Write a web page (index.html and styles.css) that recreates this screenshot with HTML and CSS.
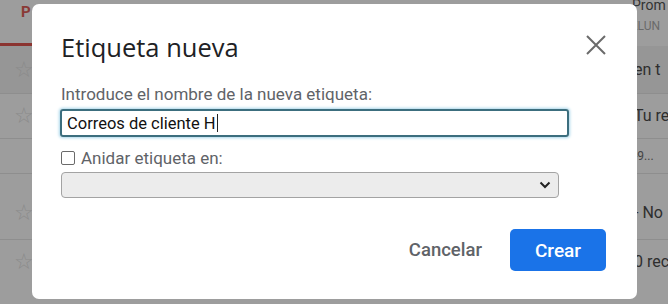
FILE: index.html
```html
<!DOCTYPE html>
<html lang="es">
<head>
<meta charset="utf-8">
<link rel="stylesheet" href="styles.css">
</head>
<body>
<div class="page">
  <div class="head">
    <span class="tab-p">P</span>
    <div class="head-right">
      <span class="from">Prom</span>
      <span class="sub">KLUN</span>
    </div>
  </div>
  <div class="tabline"></div>
  <div class="row r1"><span class="star">☆</span><span class="rtext">en t</span></div>
  <div class="row r2"><span class="star">☆</span><span class="rtext">Tu re</span></div>
  <div class="row r3"><span class="star"></span><span class="rtext small">-9...</span></div>
  <div class="row r4"><span class="star">☆</span><span class="rtext">- No</span></div>
  <div class="row r5"><span class="star">☆</span><span class="rtext">0 rec</span></div>
</div>

<div class="dialog">
  <div class="dlg-head">
    <h1 class="title">Etiqueta nueva</h1>
    <svg class="close" width="22" height="22" viewBox="0 0 22 22"><path d="M2 2 L20 20 M20 2 L2 20" stroke="#6b6b6b" stroke-width="2" fill="none"/></svg>
  </div>
  <div class="label">Introduce el nombre de la nueva etiqueta:</div>
  <div class="input">Correos de cliente H<span class="caret"></span></div>
  <label class="check-row"><span class="box"></span><span class="label">Anidar etiqueta en:</span></label>
  <div class="select">
    <svg width="12" height="8" viewBox="0 0 12 8"><path d="M1.5 1.5 L6 6 L10.5 1.5" stroke="#222" stroke-width="2" fill="none"/></svg>
  </div>
  <div class="actions">
    <span class="btn-cancel">Cancelar</span>
    <span class="btn-create">Crear</span>
  </div>
</div>
</body>
</html>
```
FILE: styles.css
```css
* { box-sizing: border-box; }
html, body { margin: 0; padding: 0; }
body {
  width: 668px;
  height: 304px;
  overflow: hidden;
  background: #9d9d9d;
  font-family: Roboto, "Liberation Sans", sans-serif;
  position: relative;
}
.page { width: 668px; height: 304px; }
.head { height: 43px; display: flex; justify-content: space-between; }
.tab-p { color: #8a3a36; font-weight: 700; font-size: 15px; padding: 3px 0 0 21px; }
.head-right { width: 38px; display: flex; flex-direction: column; }
.from { color: #333; font-size: 14px; line-height: 12px; margin-top: -1px; padding-left: 2px; }
.sub { color: #6a6a6a; font-size: 12px; line-height: 14px; margin-top: 8px; }
.tabline { height: 3px; background: #8b3430; width: 40px; }
.row { display: flex; justify-content: space-between; align-items: center; border-bottom: 1px solid #8e8e8e; }
.r1 { height: 48px; background: #969696; }
.r2 { height: 45px; }
.r3 { height: 35px; }
.r4 { height: 66px; align-items: flex-start; padding-top: 28px; }
.r5 { height: 56px; align-items: flex-start; padding-top: 11px; border-bottom: none; }
.star { color: #8a8a8a; font-size: 22px; line-height: 22px; padding-left: 14px; width: 50px; }
.rtext { color: #2e2e2e; font-size: 16px; line-height: 22px; width: 34px; white-space: nowrap; }
.small { font-size: 12px; color: #444; }

.dialog {
  position: absolute;
  left: 32px;
  top: 4px;
  width: 605px;
  height: 295px;
  background: #fff;
  border-radius: 7px;
  padding: 26px 30px 0 29px;
  display: flex;
  flex-direction: column;
}
.dlg-head { display: flex; justify-content: space-between; align-items: center; height: 34px; }
.title { margin: 0; font-weight: 400; font-size: 25.5px; color: #202124; font-family: "Open Sans", Roboto, sans-serif; }
.close { margin-top: -4px; }
.label { color: #5f6368; font-size: 17px; margin-top: 21px; line-height: 18px; }
.input {
  margin-top: 6px;
  height: 28px;
  width: 509px;
  margin-left: -1px;
  border: 2px solid #3c6e7e;
  border-radius: 3px;
  box-shadow: 0 0 3px 1px #a9d6ea;
  font-size: 16.5px;
  color: #111;
  padding: 2px 5px;
  display: flex;
  align-items: center;
}
.caret { display: inline-block; width: 1px; height: 18px; background: #222; margin-left: 1px; }
.check-row { display: flex; align-items: center; margin-top: 12px; height: 18px; }
.check-row .label { margin: 0 0 0 6px; }
.box { width: 14px; height: 14px; border: 1.5px solid #6a6a6a; border-radius: 2px; }
.select {
  margin-top: 5px;
  width: 498px;
  height: 26px;
  background: #ececec;
  border: 1px solid #a3a3a3;
  border-radius: 4px;
  display: flex;
  align-items: center;
  justify-content: flex-end;
  padding-right: 7px;
}
.actions { display: flex; justify-content: flex-end; align-items: center; margin-top: 31px; padding-right: 1px; gap: 28px; }
.btn-cancel { color: #5f6368; font-size: 18.5px; font-weight: 500; }
.btn-create {
  background: #1a73e8;
  color: #fff;
  font-size: 19px;
  font-weight: 500;
  width: 96px;
  height: 42px;
  border-radius: 5px;
  display: flex;
  align-items: center;
  justify-content: center;
}
```
